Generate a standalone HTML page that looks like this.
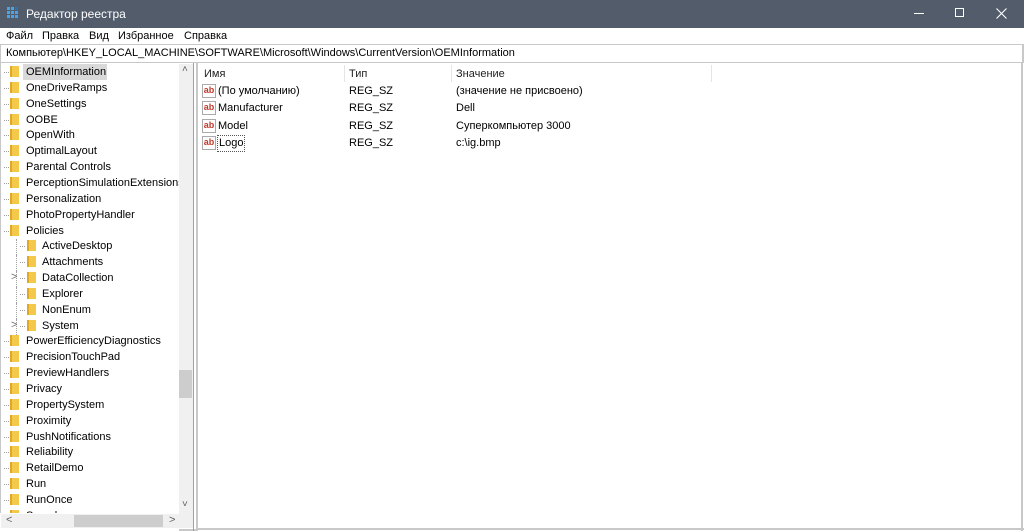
<!DOCTYPE html>
<html><head><meta charset="utf-8"><style>
*{margin:0;padding:0;box-sizing:border-box}
body{width:1024px;height:531px;overflow:hidden;background:#fff;font-family:"Segoe UI","Liberation Sans",sans-serif;font-size:11px;color:#000;position:relative}
.a{position:absolute;white-space:nowrap}
#title{left:0;top:0;width:1024px;height:28px;background:#525c6b;color:#fff;font-size:12px}
#menu{top:28px;left:0;width:1024px;height:16px;background:#fff}
#addr{top:44px;left:0;width:1024px;height:19px;border-top:1px solid #c8c8c8;border-bottom:1px solid #c8c8c8;border-left:1px solid #c8c8c8;border-right:2px solid #c8c8c8}
.f{position:absolute;width:9px;height:11px;background:#f3c84b;border-left:2px solid #e0a824}
.t{position:absolute;height:15px;line-height:15px}
.d{position:absolute;height:1px;border-top:1px dotted #a0a0a0}
.ab{position:absolute;width:14px;height:14px;border:1px solid #aaa;background:#fff;color:#c0392b;font-weight:bold;font-size:9px;line-height:10px;text-align:center}
</style></head><body>
<div class="a" id="title">
 <svg class="a" style="left:7px;top:7px" width="13" height="13"><g fill="#4aa3e6"><rect x="0" y="0" width="3" height="3"/><rect x="4" y="0" width="3" height="3"/><rect x="8" y="0" width="3" height="3" fill="#2c6fb5"/><rect x="0" y="4" width="3" height="3"/><rect x="4" y="4" width="3" height="3"/><rect x="8" y="4" width="3" height="3"/><rect x="0" y="8" width="3" height="3"/><rect x="4" y="8" width="3" height="3"/><rect x="8" y="8" width="3" height="3"/></g></svg>
 <span class="a" style="left:26px;top:7px">Редактор реестра</span>
 <div class="a" style="left:914px;top:13px;width:10px;height:1px;background:#fff"></div>
 <div class="a" style="left:955px;top:8px;width:9px;height:9px;border:1px solid #fff"></div>
 <svg class="a" style="left:996px;top:8px" width="11" height="11"><path d="M0.5 0.5L10.5 10.5M10.5 0.5L0.5 10.5" stroke="#fff" stroke-width="1.1"/></svg>
</div>
<div class="a" id="menu">
 <span class="a" style="left:6px;top:2px">Файл</span><span class="a" style="left:42px;top:2px">Правка</span><span class="a" style="left:89px;top:2px">Вид</span><span class="a" style="left:118px;top:2px">Избранное</span><span class="a" style="left:184px;top:2px">Справка</span>
</div>
<div class="a" id="addr"><span class="a" style="left:5px;top:2px">Компьютер\HKEY_LOCAL_MACHINE\SOFTWARE\Microsoft\Windows\CurrentVersion\OEMInformation</span></div>
<div class="a" style="left:0;top:63px;width:196px;height:468px;border-left:1px solid #c8c8c8;border-bottom:2px solid #c8c8c8"></div>
<div class="a" style="left:193px;top:63px;width:1px;height:468px;background:#a0a0a0"></div>
<div class="a" style="left:196px;top:63px;width:2px;height:468px;background:#c8c8c8"></div>
<div class="a" style="left:1021px;top:63px;width:2px;height:468px;background:#c8c8c8"></div>
<div class="a" style="left:196px;top:528px;width:828px;height:2px;background:#c8c8c8"></div>
<div class="a" id="tree" style="left:0;top:0"></div>
<div class="a" style="left:179px;top:64px;width:14px;height:450px;background:#f0f0f0"></div>
<div class="a" style="left:179px;top:370px;width:13px;height:28px;background:#cdcdcd"></div>
<span class="a" style="left:182px;top:64px;font-size:10px;color:#606060">&#x2C4;</span>
<span class="a" style="left:182px;top:499px;font-size:10px;color:#606060">&#x2C5;</span>
<div class="a" style="left:1px;top:514px;width:192px;height:14px;background:#f0f0f0"></div>
<div class="a" style="left:74px;top:515px;width:89px;height:12px;background:#cdcdcd"></div>
<span class="a" style="left:6px;top:514px;font-size:11px;color:#606060">&lt;</span>
<span class="a" style="left:169px;top:514px;font-size:11px;color:#606060">&gt;</span>
<div class="a" style="left:344px;top:65px;width:1px;height:17px;background:#e5e5e5"></div>
<div class="a" style="left:451px;top:65px;width:1px;height:17px;background:#e5e5e5"></div>
<div class="a" style="left:711px;top:65px;width:1px;height:17px;background:#e5e5e5"></div>
<span class="a" style="left:204px;top:68px;color:#222">Имя</span>
<span class="a" style="left:349px;top:68px;color:#222">Тип</span>
<span class="a" style="left:456px;top:68px;color:#222">Значение</span>
<div id="rows"></div>
<script>
var items=[["OEMInformation",0],["OneDriveRamps",0],["OneSettings",0],["OOBE",0],["OpenWith",0],["OptimalLayout",0],["Parental Controls",0],["PerceptionSimulationExtensions",0],["Personalization",0],["PhotoPropertyHandler",0],["Policies",0],["ActiveDesktop",1],["Attachments",1],["DataCollection",2],["Explorer",1],["NonEnum",1],["System",2],["PowerEfficiencyDiagnostics",0],["PrecisionTouchPad",0],["PreviewHandlers",0],["Privacy",0],["PropertySystem",0],["Proximity",0],["PushNotifications",0],["Reliability",0],["RetailDemo",0],["Run",0],["RunOnce",0],["Search",0]];
var h="";
items.forEach(function(it,i){var y=65+i*15.85;var sub=it[1]>0;var fx=sub?27:10,tx=sub?42:26;
h+='<div class="d" style="left:'+(sub?20:4)+'px;top:'+(y+7)+'px;width:5px"></div>';
if(sub)h+='<div class="a" style="left:16px;top:'+y+'px;width:1px;height:16px;border-left:1px dotted #a0a0a0"></div>';
if(it[1]==2)h+='<span class="a" style="left:11px;top:'+(y)+'px;color:#707070;font-size:11px">&gt;</span>';
h+='<div class="f" style="left:'+fx+'px;top:'+(y+1)+'px"></div>';
if(i==0)h+='<div class="a" style="left:23px;top:'+(y-1)+'px;width:84px;height:16px;background:#d9d9d9"></div>';
h+='<span class="t" style="left:'+tx+'px;top:'+y+'px">'+it[0]+'</span>';
});
h+='<div class="a" style="left:0;top:513px;width:179px;height:18px;background:#fff"></div>';
document.getElementById("tree").innerHTML=h;
var r=[["(По умолчанию)","REG_SZ","(значение не присвоено)"],["Manufacturer","REG_SZ","Dell"],["Model","REG_SZ","Суперкомпьютер 3000"],["Logo","REG_SZ","c:\\ig.bmp"]];
var g="";r.forEach(function(x,i){var y=84+i*17.3;
g+='<div class="ab" style="left:202px;top:'+(y)+'px">ab</div>';
g+='<span class="t" style="left:218px;top:'+y+'px;'+(i==3?'outline:1px dotted #555;padding:0 1px':'')+'">'+x[0]+'</span>';
g+='<span class="t" style="left:349px;top:'+y+'px">'+x[1]+'</span>';
g+='<span class="t" style="left:456px;top:'+y+'px">'+x[2]+'</span>';});
document.getElementById("rows").innerHTML=g;
</script>
</body></html>
